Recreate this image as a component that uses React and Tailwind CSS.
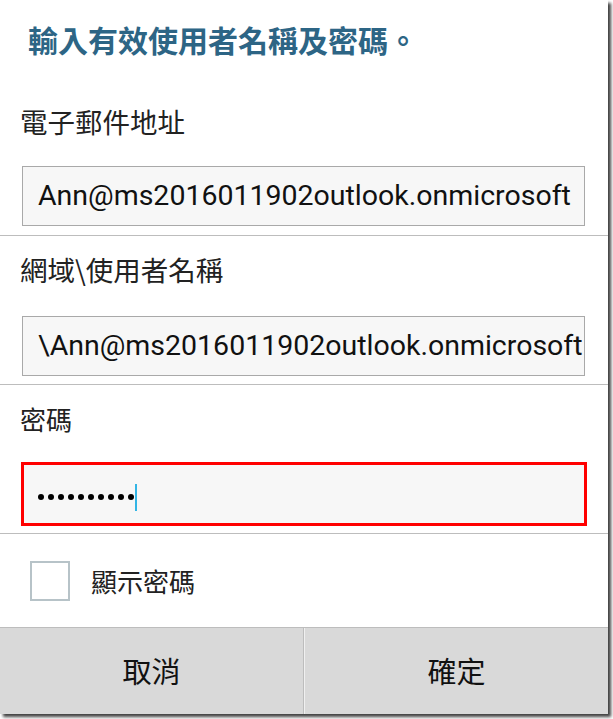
export default function App() {
  const cjk = { fontFamily: '"Noto Sans CJK TC", "Noto Sans", sans-serif' };
  return (
    <div className="w-[613px] h-[719px] bg-white overflow-hidden">
      <div
        className="w-[608px] h-[714px] bg-white flex flex-col shadow-[3px_3px_3px_rgba(0,0,0,0.75)]"
        style={cjk}
      >
        {/* Title */}
        <div className="h-[88px] pl-[28px] pt-[21px] shrink-0">
          <div className="text-[30px] leading-[36px] font-bold text-[#2d6585]">
            輸入有效使用者名稱及密碼。
          </div>
        </div>

        {/* Email */}
        <div className="h-[148px] border-b border-[#bdbdbd] px-[22px] pt-[19px] shrink-0">
          <div className="text-[27.5px] leading-[28px] text-[#222] -ml-[2px]">電子郵件地址</div>
          <div className="mt-[31px] h-[60px] w-[563px] border border-[#a9a9a9] bg-[#f7f7f7] flex items-center pl-[15px] overflow-hidden whitespace-nowrap">
            <span className="font-['Roboto',sans-serif] text-[28.5px] text-[#111]">
              Ann@ms2016011902outlook.onmicrosoft
            </span>
          </div>
        </div>

        {/* Domain\Username */}
        <div className="h-[149px] border-b border-[#bdbdbd] px-[22px] pt-[19px] shrink-0">
          <div className="text-[27.5px] leading-[28px] text-[#222] -ml-[2px]">網域\使用者名稱</div>
          <div className="mt-[33px] h-[60px] w-[563px] border border-[#a9a9a9] bg-[#f7f7f7] flex items-center pl-[15px] overflow-hidden whitespace-nowrap">
            <span className="font-['Roboto',sans-serif] text-[28.5px] text-[#111]">
              \Ann@ms2016011902outlook.onmicrosoft
            </span>
          </div>
        </div>

        {/* Password */}
        <div className="h-[149px] border-b border-[#bdbdbd] pl-[21px] pt-[21px] shrink-0">
          <div className="text-[26px] leading-[26px] text-[#222] -ml-[1px]">密碼</div>
          <div className="mt-[30px] h-[64px] w-[566px] border-[3px] border-[#ff0000] bg-[#f7f7f7] flex items-center pl-[14px]">
            <div className="flex items-center gap-[4px] mt-[6px]">
              {Array.from({ length: 10 }).map((_, i) => (
                <div key={i} className="w-[6px] h-[6px] rounded-full bg-black" />
              ))}
            </div>
            <div className="ml-[1px] w-[2px] h-[27px] bg-[#33b5e5] mt-[6px]" />
          </div>
        </div>

        {/* Show password */}
        <div className="h-[93px] flex items-center pl-[30px] shrink-0">
          <div className="w-[40px] h-[40px] border-2 border-[#b7c3c8] bg-white" />
          <div className="ml-[21px] text-[26px] leading-[26px] text-[#222]">顯示密碼</div>
        </div>

        {/* Buttons */}
        <div className="flex-1 border-t border-[#bdbdbd] bg-[#d9d9d9] flex">
          <div className="w-[303px] flex items-center justify-center text-[29px] text-[#111]">
            取消
          </div>
          <div className="w-px bg-[#bdbdbd]" />
          <div className="w-px bg-[#f0f0f0]" />
          <div className="flex-1 flex items-center justify-center text-[29px] text-[#111]">
            確定
          </div>
        </div>
      </div>
    </div>
  );
}
